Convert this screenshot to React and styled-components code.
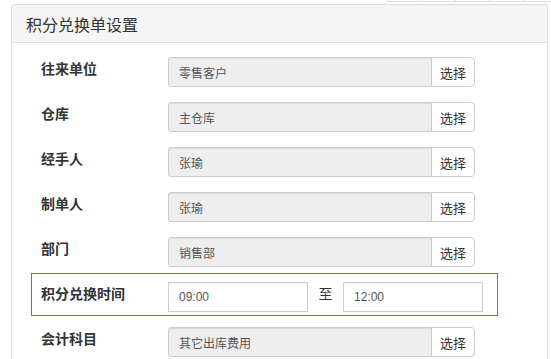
import styled, { createGlobalStyle } from "styled-components";

const GlobalStyle = createGlobalStyle`
  html, body {
    margin: 0;
    padding: 0;
    background: #fff;
  }
  body {
    font-family: "Noto Sans CJK SC", "Liberation Sans", sans-serif;
    color: #333;
  }
`;

const Page = styled.div`
  width: 551px;
  height: 359px;
  overflow: hidden;
  box-sizing: border-box;
  padding: 0 3px 0 11px;
`;

// bottom edge of the table above, barely visible
const TopStrip = styled.div`
  display: flex;
  height: 2px;
  margin-left: 376px;
  margin-right: -3px;
  border-bottom: 1px solid #ddd;
  box-sizing: border-box;
`;

const StripCell = styled.div`
  width: 33px;
  flex: none;
  border-left: 1px solid #ddd;
`;

const Panel = styled.section`
  margin-top: 2px;
  border: 1px solid #ddd;
  border-bottom: none;
  border-radius: 4px 4px 0 0;
  height: 400px;
`;

const Heading = styled.div`
  height: 37px;
  display: flex;
  align-items: center;
  padding-left: 14px;
  background: #f5f5f5;
  border-bottom: 1px solid #ddd;
  border-radius: 3px 3px 0 0;
  font-size: 16px;
  color: #333;
`;

const Body = styled.div`
  padding: 5px 0 0 19px;
`;

const Row = styled.div`
  display: flex;
  align-items: flex-start;
  width: 467px;
  box-sizing: border-box;
  padding: 9px 16px 4px 10px;
  margin-bottom: 2px;
`;

// the time row is boxed in red in the screenshot
const HighlightRow = styled(Row)`
  padding: 8px 15px 3px 9px;
  border: 1px solid #d64848;
`;

const Label = styled.label`
  width: 127px;
  flex: none;
  padding-top: 1px;
  font-size: 14px;
  line-height: 20px;
  font-weight: bold;
  color: #333;
`;

const Group = styled.div`
  display: flex;
`;

const Field = styled.div`
  width: ${(p) => p.$w}px;
  height: 30px;
  box-sizing: border-box;
  display: flex;
  align-items: center;
  padding-left: 10px;
  border: 1px solid #ccc;
  border-radius: ${(p) => (p.$time ? "0" : "3px 0 0 3px")};
  background: ${(p) => (p.$time ? "#fff" : "#eee")};
  box-shadow: inset 0 1px 1px rgba(0, 0, 0, 0.075);
  font-family: "Liberation Sans", "Noto Sans CJK SC", sans-serif;
  font-size: 12px;
  color: #555;
`;

const PickButton = styled.button`
  width: 44px;
  height: 30px;
  box-sizing: border-box;
  margin: 0 0 0 -1px;
  padding: 0;
  border: 1px solid #ccc;
  border-radius: 0 4px 4px 0;
  background: #fff;
  font-family: "Noto Sans CJK SC", sans-serif;
  font-size: 13px;
  color: #333;
`;

const To = styled.span`
  width: 35px;
  flex: none;
  padding-top: 1px;
  text-align: center;
  font-size: 14px;
  line-height: 20px;
  color: #333;
`;

const rows = [
  { label: "往来单位", value: "零售客户" },
  { label: "仓库", value: "主仓库" },
  { label: "经手人", value: "张瑜" },
  { label: "制单人", value: "张瑜" },
  { label: "部门", value: "销售部" },
  { label: "积分兑换时间", time: ["09:00", "12:00"] },
  { label: "会计科目", value: "其它出库费用" },
];

const App = () => {
  return (
    <Page>
      <GlobalStyle />
      <TopStrip>
        {[0, 1, 2, 3, 4, 5].map((i) => (
          <StripCell key={i} />
        ))}
      </TopStrip>
      <Panel>
        <Heading>积分兑换单设置</Heading>
        <Body>
          {rows.map((row) =>
            row.time ? (
              <HighlightRow key={row.label}>
                <Label>{row.label}</Label>
                <Group>
                  <Field $time $w={140}>{row.time[0]}</Field>
                  <To>至</To>
                  <Field $time $w={140}>{row.time[1]}</Field>
                </Group>
              </HighlightRow>
            ) : (
              <Row key={row.label}>
                <Label>{row.label}</Label>
                <Group>
                  <Field $w={264}>{row.value}</Field>
                  <PickButton type="button">选择</PickButton>
                </Group>
              </Row>
            )
          )}
        </Body>
      </Panel>
    </Page>
  );
};

export default App;
